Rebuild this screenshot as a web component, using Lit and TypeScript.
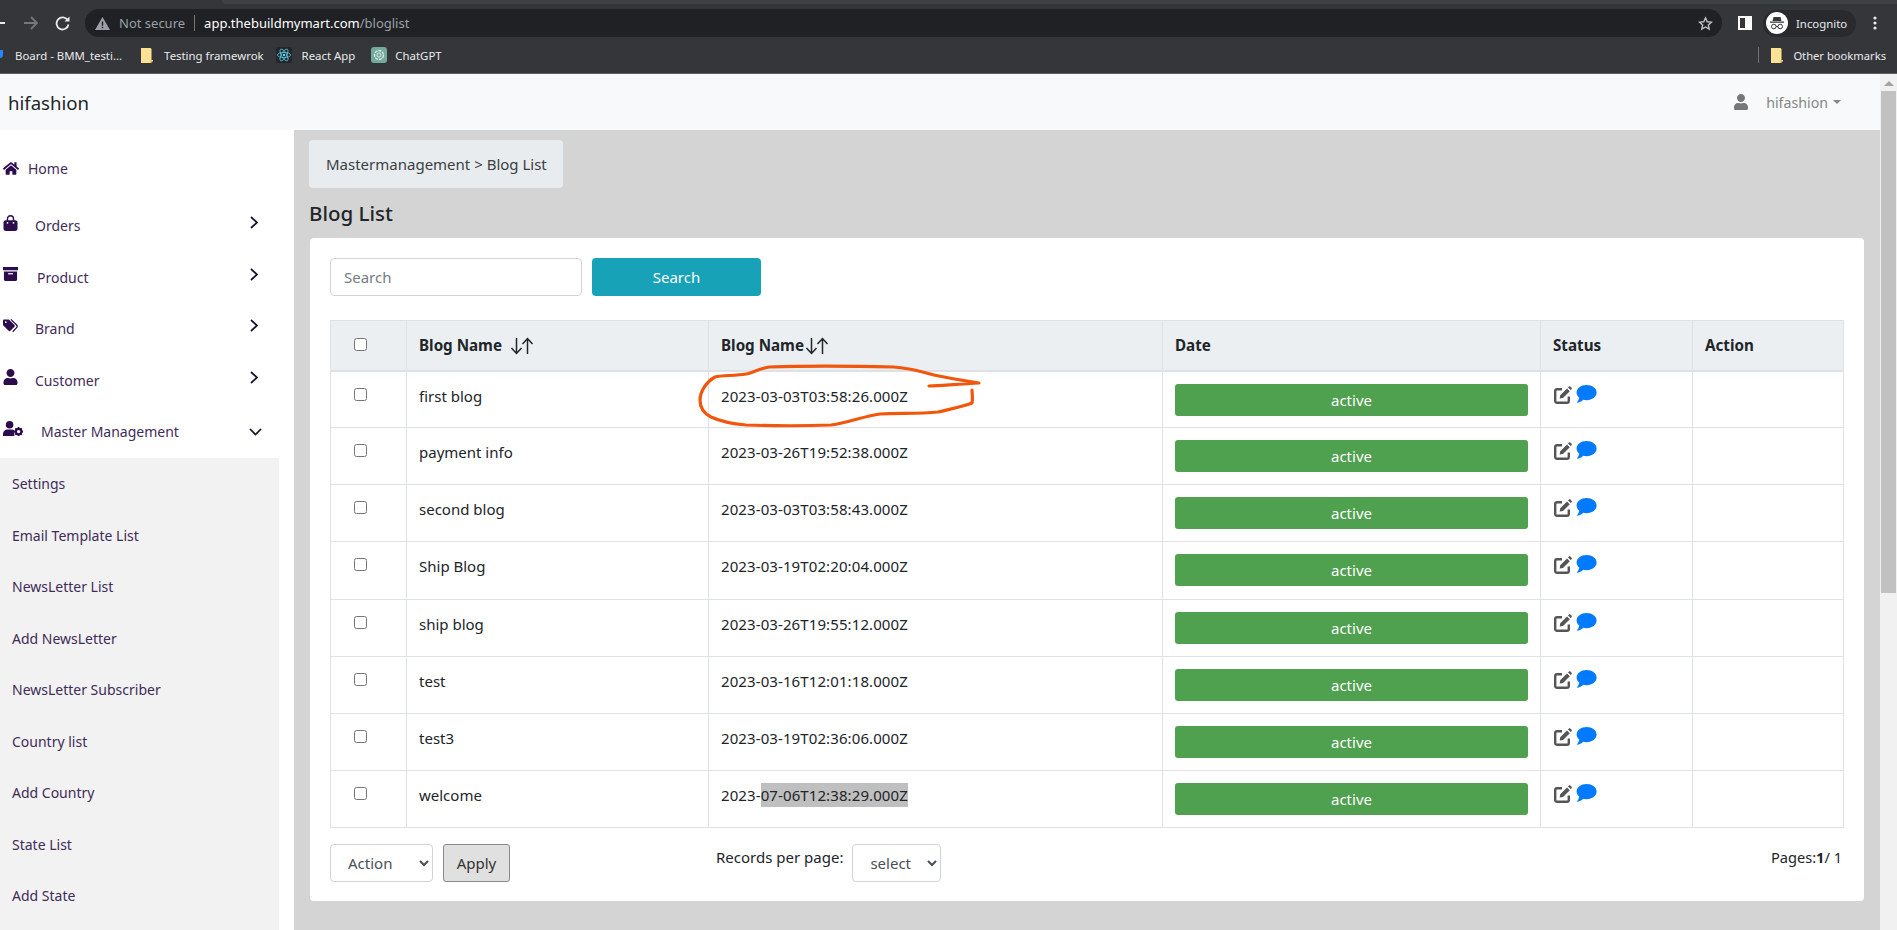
import { LitElement, html, css, svg } from "lit";
import { customElement } from "lit/decorators.js";

const rows = [
  ["first blog", "2023-03-03T03:58:26.000Z"],
  ["payment info", "2023-03-26T19:52:38.000Z"],
  ["second blog", "2023-03-03T03:58:43.000Z"],
  ["Ship Blog", "2023-03-19T02:20:04.000Z"],
  ["ship blog", "2023-03-26T19:55:12.000Z"],
  ["test", "2023-03-16T12:01:18.000Z"],
  ["test3", "2023-03-19T02:36:06.000Z"],
  ["welcome", "2023-07-06T12:38:29.000Z"],
];

const subItems = ["Settings", "Email Template List", "NewsLetter List", "Add NewsLetter", "NewsLetter Subscriber", "Country list", "Add Country", "State List", "Add State"];

const userPath = "M224 256c70.7 0 128-57.3 128-128S294.7 0 224 0 96 57.3 96 128s57.3 128 128 128zm89.6 32h-16.7c-22.2 10.2-46.9 16-72.9 16s-50.6-5.8-72.9-16h-16.7C60.2 288 0 348.2 0 422.4V464c0 26.5 21.5 48 48 48h352c26.5 0 48-21.5 48-48v-41.6c0-74.2-60.2-134.4-134.4-134.4z";

const icons = {
  home: html`<svg class="ico home" viewBox="0 0 576 512"><path d="M280.37 148.26L96 300.11V464a16 16 0 0 0 16 16l112.06-.29a16 16 0 0 0 15.92-16V368a16 16 0 0 1 16-16h64a16 16 0 0 1 16 16v95.64a16 16 0 0 0 16 16.05L464 480a16 16 0 0 0 16-16V300L295.67 148.26a12.19 12.19 0 0 0-15.3 0zM571.6 251.47L488 182.56V44.05a12 12 0 0 0-12-12h-56a12 12 0 0 0-12 12v72.61L318.47 43a48 48 0 0 0-61 0L4.34 251.47a12 12 0 0 0-1.6 16.9l25.5 31A12 12 0 0 0 45.15 301l235.22-193.74a12.19 12.19 0 0 1 15.3 0L530.9 301a12 12 0 0 0 16.9-1.6l25.5-31a12 12 0 0 0-1.7-16.93z"/></svg>`,
  bag: html`<svg class="ico" viewBox="0 0 14 16"><path d="M2.2 5.2h9.6c1.2 0 2.2 1 2.2 2.2V13.6c0 1.3-1 2.4-2.4 2.4H2.4C1 16 0 14.9 0 13.6V7.4c0-1.2 1-2.2 2.2-2.2z"/><path d="M4 7.5V3.6C4 2 5.3.8 7 .8s3 1.2 3 2.8v3.9" fill="none" stroke="currentColor" stroke-width="1.4"/><circle cx="4" cy="7.8" r=".9" fill="#fff"/><circle cx="10" cy="7.8" r=".9" fill="#fff"/></svg>`,
  box: html`<svg class="ico" viewBox="0 0 16 15"><path d="M0 0h16v3.6H0zM1 4.8h14V13.4c0 .9-.7 1.6-1.6 1.6H2.6c-.9 0-1.6-.7-1.6-1.6z"/><rect x="5.4" y="6.6" width="5.2" height="1.3" fill="#fff"/></svg>`,
  tags: html`<svg class="ico" viewBox="0 0 17 15"><path d="M0 1.4C0 .6.6 0 1.4 0H6c.4 0 .7.2 1 .4l6 6c.6.6.6 1.4 0 2l-4.6 4.6c-.6.6-1.4.6-2 0l-6-6C.2 6.7 0 6.4 0 6z"/><circle cx="3.2" cy="3.2" r="1" fill="#fff"/><path d="M9 0l6.4 6.4c1 1 1 2 0 3L11 14" fill="none" stroke="currentColor" stroke-width="1.4"/></svg>`,
  user: html`<svg class="ico" viewBox="0 0 448 512"><path d="${userPath}"/></svg>`,
  cog: html`<svg class="ico cog" viewBox="0 0 20 15"><circle cx="6.6" cy="3.8" r="3.8"/><path d="M0 15v-1.8C0 10.4 2.2 8.4 4.6 8.4h4c1 0 2 .3 2.7.9V15z"/><circle cx="15.6" cy="10.6" r="2.8" fill="none" stroke="currentColor" stroke-width="2.2"/><path d="M15.6 6v2M15.6 13.2v2M11 10.6h2M18.2 10.6h2M12.4 7.4l1.4 1.4M17.4 12.4l1.4 1.4M18.8 7.4l-1.4 1.4M13.8 12.4l-1.4 1.4" stroke="currentColor" stroke-width="1.6"/></svg>`,
};

const chevRight = html`<svg class="chev" viewBox="0 0 9 13"><path d="M1 1l6 5.5L1 12" fill="none" stroke="#14102e" stroke-width="1.7"/></svg>`;
const chevDown = html`<svg class="chevd" viewBox="0 0 13 8"><path d="M1 1l5.5 5.5L12 1" fill="none" stroke="#14102e" stroke-width="1.7"/></svg>`;

const sortIcon = html`<svg class="sort" viewBox="0 0 24 18"><path d="M6.5 1v15M1.5 11l5 5.5 5-5.5M17.5 17V2M12.5 7l5-5.5 5 5.5" fill="none" stroke="#212529" stroke-width="1.5"/></svg>`;

const folder = html`<svg class="folder" viewBox="0 0 12 15"><path d="M0 0h9.5L10.5 1v11H12v1l-2 2H0z" fill="#fde293"/><path d="M9.5 15l2.5-2.6H9.5z" fill="#d4a93a"/></svg>`;

const editIcon = html`<svg class="edit" viewBox="0 0 18 18"><path d="M8 3.2H3A1.8 1.8 0 0 0 1.200 5v10A1.800 1.800 0 0 0 3 16.800h10a1.800 1.800 0 0 0 1.800-1.800v-4.500" fill="none" stroke="#555" stroke-width="2.400"/><path d="M6.200 9.200L13 2.400l2.800 2.800-6.800 6.800-3.300.6zM14 1.400l.9-.9c.4-.4 1-.4 1.400 0l1.300 1.300c.4.4.4 1 0 1.400l-.9.9z" fill="#555"/></svg>`;
const chatIcon = html`<svg class="chat" viewBox="0 0 21 18"><path d="M10.6 0c5.6 0 10 3.3 10 7.6s-4.400 7.600-10 7.600c-1.200 0-2.300-.2-3.400-.5C5.600 16.300 3.400 17.700.7 17.700c1.400-1.500 2.200-3 2.500-5.100C1.600 11.300.6 9.500.6 7.600.6 3.300 5 0 10.600 0z" fill="#007bff"/></svg>`;

const annotation = svg`<path d="M929 386C945 385 965 384 979 383C960 380 948 378 934 375C920 371 908 368 894 367C850 366 800 366 769 367C758 369 752 373 746 374C735 376 722 375 715 377C706 382 700 392 700 400C700 408 705 414 711 417C722 422 734 424 746 425C775 426 805 426 831 425C848 423 864 416 880 414C900 413 920 414 938 412C950 409 962 407 972 403C973 398 972 394 972 390" fill="none" stroke="#f2560c" stroke-width="3.2" stroke-linecap="round" stroke-linejoin="round"/>`;

@customElement("app-root")
export class AppRoot extends LitElement {
  static styles = css`
    :host { display: block; width: 1897px; height: 930px; overflow: hidden; position: relative; font-family: "Noto Sans", "Open Sans", sans-serif; font-size: 14px; color: #212529; background: #fff; }
    * { box-sizing: border-box; }

    .chrome { height: 74px; background: #35363a; border-bottom: 1px solid #5f6063; color: #e8eaed; display: flex; flex-direction: column; font-size: 11.4px; }
    .tabstrip { height: 9px; display: flex; justify-content: flex-end; }
    .tab { width: 1675px; height: 4px; background: #3f4245; border-bottom-left-radius: 4px; }
    .toolbar { height: 28px; display: flex; align-items: center; position: relative; }
    .navbtn { flex: none; display: block; }
    .backdash { width: 5px; height: 2px; background: #e8eaed; margin-right: 19px; }
    .fwd { width: 14px; height: 14px; margin-right: 17px; }
    .reload { width: 15px; height: 15px; margin-right: 15px; }
    .omni { width: 1637px; height: 28px; background: #202124; border-radius: 14px; display: flex; align-items: center; padding-left: 10px; font-size: 13px; flex: none; }
    .warn { width: 15px; height: 13px; margin-right: 9px; flex: none; }
    .notsec { color: #9aa0a6; }
    .sep { width: 1px; height: 16px; background: #70757a; margin: 0 9px; flex: none; }
    .url { color: #fff; }
    .path { color: #9aa0a6; }
    .star { width: 15px; height: 15px; margin-left: auto; margin-right: 9px; flex: none; }
    .panel { width: 14px; height: 14px; margin-left: 16px; border: 2px solid #fff; border-right-width: 7px; flex: none; }
    .incog { width: 93px; height: 27px; margin-left: 11px; border-radius: 14px; background: #292a2d; display: flex; align-items: center; padding-left: 3px; gap: 8px; flex: none; font-size: 11.4px; color: #e8eaed; }
    .incog svg { width: 22px; height: 22px; flex: none; }
    .dots { width: 4px; height: 14px; margin-left: 17px; flex: none; }
    .bookmarks { flex: 1; display: flex; align-items: center; padding-right: 11px; }
    .bm { display: flex; align-items: center; gap: 10px; margin-right: 16px; white-space: nowrap; }
    .bm.first { margin-left: 15px; margin-right: 19px; }
    .bm.tf { gap: 11px; margin-right: 12px; }
    .bm.gpt { gap: 8px; }
    .bmicon { width: 16px; height: 16px; flex: none; }
    .folder { width: 12px; height: 15px; flex: none; }
    .bmsep { width: 1px; height: 16px; background: #6f7074; margin-left: auto; margin-right: 12px; }
    .bm.other { gap: 10px; margin-right: 0; font-size: 11.2px; }
    .blue { position: absolute; left: 0; top: 50px; width: 3px; height: 8px; background: #2684ff; border-radius: 0 0 3px 0; }

    .viewport { display: grid; grid-template-columns: 1880px 17px; height: 856px; }
    .page { display: flex; flex-direction: column; min-width: 0; }

    .navbar { height: 56px; background: #f8f9fa; display: flex; align-items: center; padding: 0 39px 0 8px; flex: none; }
    .brand { font-size: 18.6px; color: #212529; }
    .account { margin-left: auto; display: flex; align-items: center; color: #868686; font-size: 14.2px; }
    .account .ico { width: 16px; height: 16px; fill: #777; margin-right: 17px; top: 0; }
    .caret { width: 0; height: 0; margin-left: 5px; border: 4px solid transparent; border-top-color: #868686; border-bottom: 0; }

    .layout { display: grid; grid-template-columns: 294px 1586px; height: 800px; }
    .sidebar { background: #fff; color: #3f2c58; overflow: hidden; }
    .nav { height: 328px; padding-left: 3px; display: flex; flex-direction: column; position: relative; }
    .item { height: 51.5px; display: flex; align-items: center; padding-right: 35px; }
    .item.home { height: 43px; margin-top: 17px; margin-bottom: 10px; }
    .ico { width: 15px; height: 16px; fill: #2d0c4e; color: #2d0c4e; flex: none; display: block; position: relative; top: -3px; }
    .ico.home { width: 16px; height: 15px; top: 0; }
    .ico.cog { width: 20px; height: 15px; }
    .lbl { flex: 1; }
    .chev { width: 9px; height: 13px; flex: none; position: relative; top: -3px; }
    .chevd { width: 13px; height: 8px; flex: none; margin-right: -3px; }
    .m-home { margin-left: 9px; }
    .m-orders { margin-left: 17px; }
    .m-prod { margin-left: 19px; }
    .m-mgmt { margin-left: 18px; }
    .sub { width: 279px; background: #f2f2f2; height: 472px; }
    .sub div { height: 51.5px; display: flex; align-items: center; padding-left: 12px; font-size: 14px; }

    .main { background: #d4d4d4; padding: 10px 16px 0 15px; font-size: 15px; }
    .crumb { width: 254px; height: 48px; background: #e9ecef; border-radius: 4px; display: flex; align-items: center; padding-left: 17px; color: #3a3f44; white-space: nowrap; }
    h1 { font-size: 20.5px; font-weight: 500; margin: 0; height: 50px; display: flex; align-items: center; color: #212529; }
    .card { margin-left: 1px; height: 663px; background: #fff; border-radius: 4px; padding: 20px 21px 0 20px; }
    .searchrow { display: flex; gap: 10px; height: 38px; margin-bottom: 24px; }
    input.search { width: 252px; height: 38px; border: 1px solid #ced4da; border-radius: 4px; padding: 0 13px; font: inherit; outline: none; }
    input.search::placeholder { color: #757c83; }
    .go { width: 169px; height: 38px; background: #17a2b8; color: #fff; border: 0; border-radius: 4px; font: inherit; }

    table { width: 1513px; border-collapse: collapse; table-layout: fixed; }
    .c1 { width: 76px; } .c2 { width: 302px; } .c3 { width: 454px; } .c4 { width: 378px; } .c5 { width: 152px; } .c6 { width: 151px; }
    th, td { border: 1px solid #dee2e6; text-align: left; vertical-align: top; padding: 12px; }
    th { height: 50px; background: #ebeff2; border-bottom-width: 2px; font-weight: 700; font-size: 15.2px; padding-top: 14px; white-space: nowrap; }
    td { height: 57.14px; padding-top: 14px; }
    .chk { padding-left: 23px; }
    th.chk { padding-top: 17px; }
    td.chk { padding-top: 16px; }
    input[type="checkbox"] { width: 13px; height: 13px; margin: 0; display: block; }
    .sort { width: 24px; height: 18px; vertical-align: -4px; }
    .sortgap { margin-left: 8px; }
    .sortgap2 { margin-left: 1px; }
    .date { letter-spacing: 0.1px; }
    .sel { background: #bfbfbf; padding: 2px 0; }
    td.badgecell { padding: 12px 12px 0 12px; }
    .badge { height: 32px; background: #4fa150; color: #fff; border-radius: 3px; display: flex; align-items: center; justify-content: center; }
    td.acts { padding: 14px 0 0 13px; }
    .actwrap { display: flex; gap: 4px; align-items: flex-start; }
    .edit { width: 18px; height: 18px; flex: none; }
    .chat { width: 21px; height: 18px; flex: none; margin-top: -1px; }

    .foot { display: grid; grid-template-columns: 386px 1fr auto; margin-top: 16px; width: 1513px; }
    .left { display: flex; gap: 10px; }
    select { height: 38px; border: 1px solid #ced4da; border-radius: 4px; background: #fff; color: #495057; font: inherit; padding: 0 8px 0 13px; }
    .action { width: 103px; }
    .apply { width: 67px; height: 38px; background: #e0e0e0; border: 1px solid #8a8a8a; border-radius: 3px; color: #333; font: inherit; padding: 0; }
    .records { display: flex; gap: 9px; align-items: flex-start; }
    .records span { line-height: 26px; }
    .size { width: 89px; }
    .pages { line-height: 26px; padding-right: 1px; font-size: 14.6px; }

    .scroll { background: #f1f1f1; display: flex; flex-direction: column; align-items: center; }
    .up { width: 0; height: 0; margin-top: 7px; border: 5px solid transparent; border-bottom: 5px solid #a3a3a3; border-top: 0; }
    .thumb { width: 15px; height: 502px; background: #c1c1c1; margin-top: 5px; }

    .mark { position: absolute; left: 0; top: 0; width: 1897px; height: 930px; pointer-events: none; }
  `;

  render() {
    return html`
      <div class="chrome">
        <div class="tabstrip"><div class="tab"></div></div>
        <div class="toolbar">
          <div class="navbtn backdash"></div>
          <svg class="navbtn fwd" viewBox="0 0 14 14"><path d="M0 7h12.500M7 1l6 6-6 6" fill="none" stroke="#74777c" stroke-width="1.800"/></svg>
          <svg class="navbtn reload" viewBox="0 0 15 15"><path d="M12.700 4.300A6 6 0 1 0 13.500 8.500" fill="none" stroke="#e8eaed" stroke-width="1.800"/><path d="M9.500 5.500H14.500V.5z" fill="#e8eaed"/></svg>
          <div class="omni">
            <svg class="warn" viewBox="0 0 15 13"><path d="M7.500 0L15 13H0z" fill="#9aa0a6"/><path d="M6.800 4.500h1.400v4.300H6.800zM6.800 9.800h1.400v1.400H6.800z" fill="#202124"/></svg>
            <span class="notsec">Not secure</span><span class="sep"></span><span class="url">app.thebuildmymart.com</span><span class="path">/bloglist</span>
            <svg class="star" viewBox="0 0 24 24"><path d="M12 3l2.800 6.200 6.700.7-5 4.500 1.400 6.600-5.900-3.400-5.900 3.400 1.400-6.600-5-4.500 6.700-.7z" fill="none" stroke="#bdc1c6" stroke-width="2.200"/></svg>
          </div>
          <div class="panel"></div>
          <div class="incog">
            <svg viewBox="0 0 22 22"><circle cx="11" cy="11" r="11" fill="#fff"/><path d="M7.500 5h7l1 4h-9zM4 9.500h14v1.200H4z" fill="#35363a"/><circle cx="7.800" cy="14.500" r="2.300" fill="none" stroke="#35363a" stroke-width="1"/><circle cx="14.200" cy="14.500" r="2.300" fill="none" stroke="#35363a" stroke-width="1"/><path d="M10 14.500h2" stroke="#35363a"/></svg>
            <span>Incognito</span>
          </div>
          <svg class="dots" viewBox="0 0 4 14"><circle cx="2" cy="2" r="1.600" fill="#e8eaed"/><circle cx="2" cy="7" r="1.600" fill="#e8eaed"/><circle cx="2" cy="12" r="1.600" fill="#e8eaed"/></svg>
        </div>
        <div class="bookmarks">
          <div class="bm first">Board - BMM_testi...</div>
          <div class="bm tf">${folder}Testing framewrok</div>
          <div class="bm">
            <svg class="bmicon" viewBox="0 0 16 16"><rect width="16" height="16" rx="2" fill="#23272a"/><g fill="none" stroke="#61dafb" stroke-width=".7"><ellipse cx="8" cy="8" rx="6.600" ry="2.600"/><ellipse cx="8" cy="8" rx="6.600" ry="2.600" transform="rotate(60 8 8)"/><ellipse cx="8" cy="8" rx="6.600" ry="2.600" transform="rotate(120 8 8)"/></g><circle cx="8" cy="8" r="1.200" fill="#61dafb"/></svg>
            React App
          </div>
          <div class="bm gpt">
            <svg class="bmicon" viewBox="0 0 16 16"><rect width="16" height="16" rx="3" fill="#74aa9c"/><circle cx="8" cy="8" r="4.500" fill="none" stroke="#dfeee9" stroke-width="1.300" stroke-dasharray="3 1"/><circle cx="8" cy="8" r="2" fill="none" stroke="#dfeee9" stroke-width=".9"/></svg>
            ChatGPT
          </div>
          <div class="bmsep"></div>
          <div class="bm other">${folder}Other bookmarks</div>
        </div>
        <div class="blue"></div>
      </div>

      <div class="viewport">
        <div class="page">
          <div class="navbar">
            <div class="brand">hifashion</div>
            <div class="account">${icons.user}hifashion<span class="caret"></span></div>
          </div>

          <div class="layout">
            <aside class="sidebar">
              <div class="nav">
                <div class="item home">${icons.home}<span class="lbl m-home">Home</span></div>
                <div class="item">${icons.bag}<span class="lbl m-orders">Orders</span>${chevRight}</div>
                <div class="item">${icons.box}<span class="lbl m-prod">Product</span>${chevRight}</div>
                <div class="item">${icons.tags}<span class="lbl m-orders">Brand</span>${chevRight}</div>
                <div class="item">${icons.user}<span class="lbl m-orders">Customer</span>${chevRight}</div>
                <div class="item">${icons.cog}<span class="lbl m-mgmt">Master Management</span>${chevDown}</div>
              </div>
              <div class="sub">${subItems.map((s) => html`<div>${s}</div>`)}</div>
            </aside>

            <main class="main">
              <div class="crumb">Mastermanagement &gt; Blog List</div>
              <h1>Blog List</h1>
              <div class="card">
                <div class="searchrow">
                  <input class="search" placeholder="Search" />
                  <button class="go">Search</button>
                </div>
                <table>
                  <colgroup><col class="c1" /><col class="c2" /><col class="c3" /><col class="c4" /><col class="c5" /><col class="c6" /></colgroup>
                  <thead>
                    <tr>
                      <th class="chk"><input type="checkbox" /></th>
                      <th>Blog Name<span class="sortgap"></span>${sortIcon}</th>
                      <th>Blog Name<span class="sortgap2"></span>${sortIcon}</th>
                      <th>Date</th>
                      <th>Status</th>
                      <th>Action</th>
                    </tr>
                  </thead>
                  <tbody>
                    ${rows.map(([name, date], i) => html`
                      <tr>
                        <td class="chk"><input type="checkbox" /></td>
                        <td>${name}</td>
                        <td class="date">${i === 7 ? html`2023-<span class="sel">${date.slice(5)}</span>` : date}</td>
                        <td class="badgecell"><div class="badge">active</div></td>
                        <td class="acts"><div class="actwrap">${editIcon}${chatIcon}</div></td>
                        <td></td>
                      </tr>`)}
                  </tbody>
                </table>
                <div class="foot">
                  <div class="left">
                    <select class="action"><option>Action</option></select>
                    <button class="apply">Apply</button>
                  </div>
                  <div class="records">
                    <span>Records per page:</span>
                    <select class="size"><option>select</option></select>
                  </div>
                  <div class="pages">Pages:<b>1</b>/ 1</div>
                </div>
              </div>
            </main>
          </div>
        </div>

        <div class="scroll"><div class="up"></div><div class="thumb"></div></div>
      </div>

      <svg class="mark" viewBox="0 0 1897 930">${annotation}</svg>
    `;
  }
}
